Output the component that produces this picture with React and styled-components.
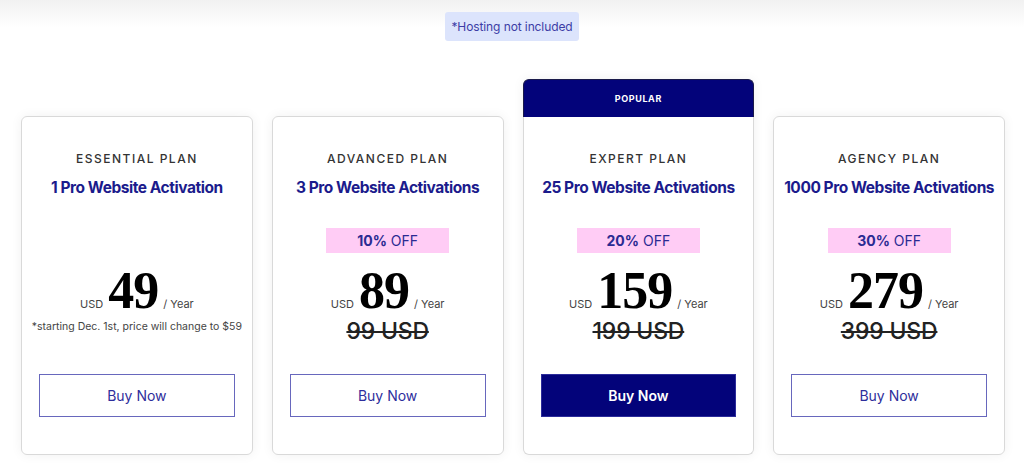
import React from "react";
import styled, { createGlobalStyle, css } from "styled-components";

const GlobalStyle = createGlobalStyle`
  html, body { margin: 0; padding: 0; }
  body {
    font-family: Inter, "Noto Sans", Arial, sans-serif;
    background: linear-gradient(to bottom, #f1f1f1 0px, #ffffff 28px, #ffffff 100%);
    color: #222;
    width: 1024px;
    height: 472px;
    overflow: hidden;
  }
`;

const NAVY = "#03037a";

const Page = styled.div`
  display: flex;
  flex-direction: column;
  align-items: center;
  padding-top: 12px;
`;

const HostingNote = styled.div`
  background: #dce4fc;
  color: #3d3da6;
  font-size: 12px;
  line-height: 29px;
  height: 29px;
  padding: 0 6px;
  border-radius: 3px;
  letter-spacing: -0.1px;
`;

const Plans = styled.div`
  align-self: stretch;
  display: grid;
  grid-template-columns: repeat(4, minmax(0, 1fr));
  column-gap: 19px;
  align-items: end;
  padding: 0 19px 0 21px;
  margin-top: 38px;
`;

const Column = styled.div`
  display: flex;
  flex-direction: column;
  min-width: 0;
  border-radius: 6px;
  box-shadow: 0 0 12px rgba(0, 0, 0, 0.06);
`;

const PopularTab = styled.div`
  height: 37px;
  background: ${NAVY};
  border-radius: 6px 6px 0 0;
  color: #fff;
  font-size: 9px;
  font-weight: 700;
  letter-spacing: 0.6px;
  display: flex;
  align-items: center;
  justify-content: center;
  border: 1px solid #1a1a4a;
  border-bottom: none;
`;

const Card = styled.div`
  background: #fff;
  border: 1px solid #d9d9d9;
  border-radius: ${(p) => (p.$popular ? "0 0 6px 6px" : "6px")};
  ${(p) => p.$popular && css`border-top: none;`}
  padding: 34px 17px 37px;
  display: flex;
  flex-direction: column;
  align-items: center;
  text-align: center;
`;

const PlanName = styled.div`
  font-size: 12px;
  line-height: 16px;
  font-weight: 500;
  letter-spacing: 1.5px;
  color: #333;
`;

const PlanSub = styled.div`
  margin-top: 10px;
  font-size: 15.5px;
  line-height: 22px;
  font-weight: 700;
  letter-spacing: -0.45px;
  color: #1b1b8c;
  white-space: nowrap;
`;

const Discount = styled.div`
  margin-top: 29px;
  width: 123px;
  height: 25px;
  background: #ffccf5;
  color: #2a2a92;
  font-size: 14px;
  display: flex;
  align-items: center;
  justify-content: center;
  gap: 4px;
  visibility: ${(p) => (p.$hidden ? "hidden" : "visible")};
  b { font-weight: 700; }
`;

const PriceRow = styled.div`
  margin-top: 13px;
  display: flex;
  align-items: baseline;
  justify-content: center;
  gap: 5px;
  height: 50px;
`;

const Small = styled.span`
  font-size: 11px;
  color: #444;
`;

const Amount = styled.span`
  font-family: "Liberation Serif", "Times New Roman", serif;
  font-weight: 700;
  font-size: 52px;
  line-height: 50px;
  letter-spacing: -1px;
  color: #000;
`;

const Below = styled.div`
  margin-top: 1px;
  height: 28px;
  display: flex;
  align-items: ${(p) => (p.$note ? "flex-start" : "center")};
  justify-content: center;
`;

const OldPrice = styled.span`
  font-size: 23px;
  font-weight: 500;
  color: #222;
  text-decoration: line-through;
  text-decoration-thickness: 1.5px;
  letter-spacing: -0.2px;
`;

const Note = styled.span`
  font-size: 10.5px;
  line-height: 14px;
  padding-top: 3px;
  color: #444;
  white-space: nowrap;
`;

const BuyButton = styled.button`
  margin-top: 29px;
  width: 100%;
  height: 43px;
  font-family: inherit;
  font-size: 14px;
  cursor: pointer;
  ${(p) =>
    p.$primary
      ? css`
          background: ${NAVY};
          color: #fff;
          border: 1px solid #2c2c9a;
          font-weight: 600;
        `
      : css`
          background: #fff;
          color: #2e2e9c;
          border: 1px solid #6767bd;
          font-weight: 400;
        `}
`;

const plans = [
  { name: "ESSENTIAL PLAN", sub: "1 Pro Website Activation", price: "49", note: "*starting Dec. 1st, price will change to $59" },
  { name: "ADVANCED PLAN", sub: "3 Pro Website Activations", price: "89", off: "10%", old: "99 USD" },
  { name: "EXPERT PLAN", sub: "25 Pro Website Activations", price: "159", off: "20%", old: "199 USD", popular: true },
  { name: "AGENCY PLAN", sub: "1000 Pro Website Activations", price: "279", off: "30%", old: "399 USD" },
];

export default function App() {
  return (
    <>
      <GlobalStyle />
      <Page>
        <HostingNote>*Hosting not included</HostingNote>
        <Plans>
          {plans.map((p) => (
            <Column key={p.name}>
              {p.popular && <PopularTab>POPULAR</PopularTab>}
              <Card $popular={p.popular}>
                <PlanName>{p.name}</PlanName>
                <PlanSub>{p.sub}</PlanSub>
                <Discount $hidden={!p.off}>
                  <b>{p.off || "0%"}</b>
                  <span>OFF</span>
                </Discount>
                <PriceRow>
                  <Small>USD</Small>
                  <Amount>{p.price}</Amount>
                  <Small>/ Year</Small>
                </PriceRow>
                <Below $note={!!p.note}>
                  {p.note ? <Note>{p.note}</Note> : <OldPrice>{p.old}</OldPrice>}
                </Below>
                <BuyButton $primary={p.popular}>Buy Now</BuyButton>
              </Card>
            </Column>
          ))}
        </Plans>
      </Page>
    </>
  );
}
